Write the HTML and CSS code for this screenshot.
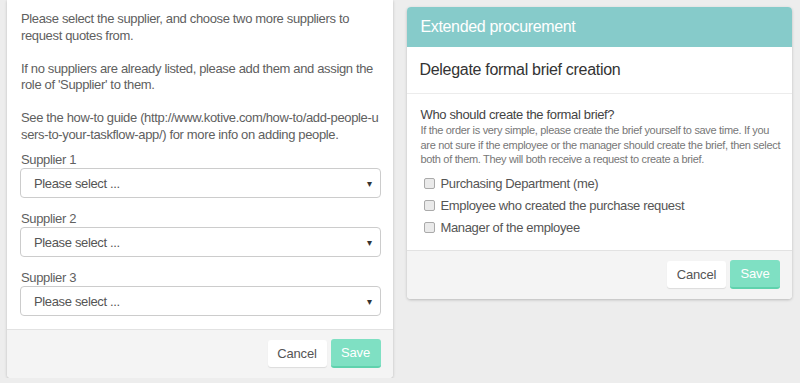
FILE: index.html
```html
<!DOCTYPE html>
<html>
<head>
<meta charset="utf-8">
<link rel="stylesheet" href="styles.css">
</head>
<body>
<div class="page">
  <div class="panel panel-left">
    <div class="body">
      <p class="intro">Please select the supplier, and choose two more suppliers to request quotes from.<br><br>If no suppliers are already listed, please add them and assign the role of 'Supplier' to them.<br><br>See the how-to guide (http://www.kotive.com/how-to/add-people-u<wbr>sers-to-your-taskflow-app/) for more info on adding people.</p>
      <div class="group">
        <label class="label">Supplier 1</label>
        <div class="select"><span>Please select ...</span><span class="caret">▾</span></div>
      </div>
      <div class="group">
        <label class="label">Supplier 2</label>
        <div class="select"><span>Please select ...</span><span class="caret">▾</span></div>
      </div>
      <div class="group last">
        <label class="label">Supplier 3</label>
        <div class="select"><span>Please select ...</span><span class="caret">▾</span></div>
      </div>
    </div>
    <div class="footer">
      <button class="btn btn-cancel">Cancel</button>
      <button class="btn btn-save">Save</button>
    </div>
  </div>

  <div class="panel panel-right">
    <div class="header">Extended procurement</div>
    <div class="subhead">Delegate formal brief creation</div>
    <div class="body body-right">
      <div class="question">Who should create the formal brief?</div>
      <div class="help">If the order is very simple, please create the brief yourself to save time. If you are not sure if the employee or the manager should create the brief, then select both of them. They will both receive a request to create a brief.</div>
      <div class="checks">
        <label class="check"><span class="box"></span>Purchasing Department (me)</label>
        <label class="check"><span class="box"></span>Employee who created the purchase request</label>
        <label class="check"><span class="box"></span>Manager of the employee</label>
      </div>
    </div>
    <div class="footer">
      <button class="btn btn-cancel">Cancel</button>
      <button class="btn btn-save">Save</button>
    </div>
  </div>
</div>
</body>
</html>
```

FILE: styles.css
```css
html, body {
  margin: 0;
  padding: 0;
  background: #ededed;
  font-family: "Liberation Sans", Arial, sans-serif;
  font-size: 13px;
  letter-spacing: -0.35px;
  color: #555;
}
.page {
  display: flex;
  gap: 14px;
  padding: 0 8px 0 7px;
  align-items: flex-start;
}
.panel {
  flex: 1;
  background: #fff;
  border-radius: 4px;
  box-shadow: 0 1px 3px rgba(0,0,0,0.22);
  overflow: hidden;
}
.panel-left {
  border-radius: 0 0 4px 4px;
}
.panel-right {
  margin-top: 7px;
}
.body {
  padding: 11px 12px 13px 14px;
}
.intro {
  margin: 0 0 8px 0;
  line-height: 16.5px;
  color: #606060;
}
.group {
  margin-bottom: 12px;
}
.group.last {
  margin-bottom: 0;
}
.label {
  display: block;
  line-height: 17px;
  color: #606060;
}
.select {
  margin-left: -1px;
  height: 28px;
  border: 1px solid #ccc;
  border-radius: 4px;
  display: flex;
  align-items: center;
  justify-content: space-between;
  padding: 0 8px 0 13px;
  color: #555;
}
.caret {
  font-size: 10px;
  color: #333;
}
.footer {
  background: #f4f4f4;
  border-top: 1px solid #e2e2e2;
  display: flex;
  justify-content: flex-end;
  align-items: center;
  gap: 4px;
  padding: 9px 12px 10px;
  height: 29px;
}
.btn {
  font-family: "Liberation Sans", Arial, sans-serif;
  font-size: 13px;
  letter-spacing: -0.2px;
  border: none;
  border-radius: 3px;
  padding: 0;
  cursor: pointer;
}
.btn-cancel {
  width: 59px;
  height: 27px;
  background: #fff;
  color: #555;
  box-shadow: 0 1px 1px rgba(0,0,0,0.1);
}
.btn-save {
  width: 50px;
  height: 29px;
  background: #7fe0c3;
  color: #fff;
  border-bottom: 2px solid #5fd2ad;
}
.header {
  background: #86cbca;
  color: #fff;
  height: 40px;
  line-height: 40px;
  padding: 0 14px;
  font-size: 16px;
  letter-spacing: -0.35px;
}
.subhead {
  height: 46px;
  line-height: 46px;
  border-bottom: 1px solid #ececec;
  padding: 0 13px;
  font-size: 16px;
  letter-spacing: -0.3px;
  color: #333;
}
.body-right {
  padding: 13px 10px 11px 14px;
}
.question {
  line-height: 16px;
  color: #444;
}
.help {
  font-size: 11px;
  letter-spacing: -0.32px;
  line-height: 14.5px;
  color: #777;
}
.checks {
  margin-top: 6px;
}
.check {
  display: flex;
  align-items: center;
  height: 22px;
  color: #555;
  padding-left: 3px;
}
.box {
  width: 9px;
  height: 9px;
  border: 1px solid #aaa;
  border-radius: 2px;
  background: #eaeaea;
  margin-right: 6px;
}
```
